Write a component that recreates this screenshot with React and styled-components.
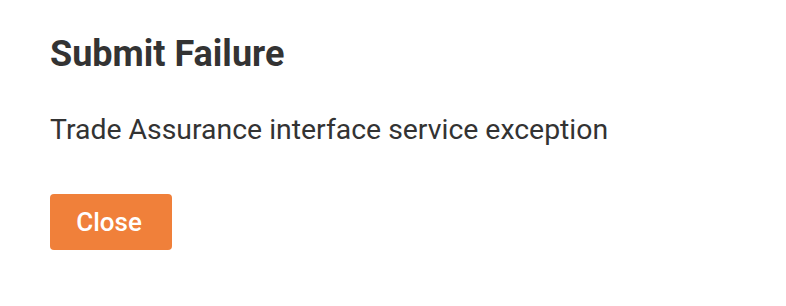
import React from "react";
import styled, { createGlobalStyle } from "styled-components";

const GlobalStyle = createGlobalStyle`
  html, body {
    margin: 0;
    padding: 0;
    background: #ffffff;
  }
  body {
    font-family: Roboto, "Liberation Sans", Arial, sans-serif;
  }
`;

const Dialog = styled.div`
  width: 786px;
  height: 306px;
  box-sizing: border-box;
  padding: 32px 50px 0;
  background: #ffffff;
  display: flex;
  flex-direction: column;
  align-items: flex-start;
`;

const Title = styled.h2`
  margin: 0;
  font-size: 36px;
  line-height: 44px;
  font-weight: 700;
  color: #333333;
`;

const Message = styled.p`
  margin: 36px 0 0;
  font-size: 28.4px;
  line-height: 36px;
  font-weight: 400;
  color: #333333;
`;

const CloseButton = styled.button`
  margin-top: 46px;
  width: 122px;
  height: 56px;
  padding: 0 4px 0 0;
  border: none;
  border-radius: 4px;
  background: #f0803a;
  color: #ffffff;
  font-family: inherit;
  font-size: 26px;
  font-weight: 500;
  cursor: pointer;
`;

export default function App() {
  return (
    <>
      <GlobalStyle />
      <Dialog>
        <Title>Submit Failure</Title>
        <Message>Trade Assurance interface service exception</Message>
        <CloseButton>Close</CloseButton>
      </Dialog>
    </>
  );
}
